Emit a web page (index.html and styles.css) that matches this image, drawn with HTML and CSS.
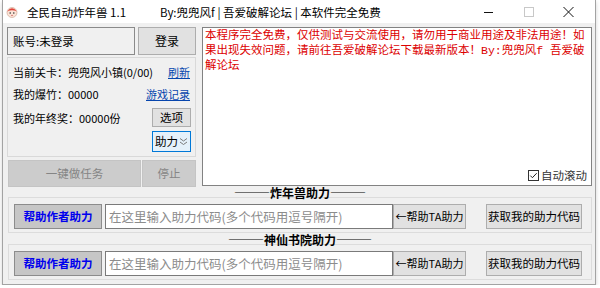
FILE: index.html
```html
<!DOCTYPE html>
<html lang="zh-CN">
<head>
  <meta charset="UTF-8">
  <meta name="viewport" content="width=device-width, initial-scale=1.0">
  <title>全民自动炸年兽 1.1</title>
  <link rel="stylesheet" href="styles.css">
</head>
<body>
  <div class="window">
    <div class="titlebar">
      <svg class="app-icon" width="12" height="12" viewBox="0 0 12 12">
        <circle cx="6" cy="6.5" r="5" fill="#fbe3d6" stroke="#c9a08c" stroke-width="0.6"/>
        <path d="M1.2 5.5 Q6 -1 10.8 5.5 Q6 3.2 1.2 5.5Z" fill="#e0443a"/>
        <circle cx="4.2" cy="7" r="0.8" fill="#333"/>
        <circle cx="7.8" cy="7" r="0.8" fill="#333"/>
        <path d="M5 9.2 Q6 10 7 9.2" stroke="#c04040" stroke-width="0.6" fill="none"/>
      </svg>
      <span class="title">全民自动炸年兽 1.1</span>
      <span class="subtitle">By:兜兜风f | 吾爱破解论坛 | 本软件完全免费</span>
      <div class="controls">
        <svg class="ctl" width="40" height="22" viewBox="0 0 40 22"><path d="M16 11.5 H25" stroke="#111" stroke-width="1"/></svg>
        <svg class="ctl" width="40" height="22" viewBox="0 0 40 22"><rect x="16.5" y="6.5" width="9" height="9" fill="none" stroke="#c8c8c8" stroke-width="1"/></svg>
        <svg class="ctl" width="40" height="22" viewBox="0 0 40 22"><path d="M15.5 6 L25.5 16 M25.5 6 L15.5 16" stroke="#111" stroke-width="1"/></svg>
      </div>
    </div>

    <div class="client">
      <div class="top">
        <div class="left">
          <div class="account-row">
            <div class="account">账号:未登录</div>
            <button class="btn login">登录</button>
          </div>

          <div class="info">
            <div class="info-row">
              <span>当前关卡：兜兜风小镇(0/00)</span>
              <a href="#" class="link">刷新</a>
            </div>
            <div class="info-row">
              <span>我的爆竹：00000</span>
              <a href="#" class="link">游戏记录</a>
            </div>
            <div class="info-row options">
              <span>我的年终奖：00000份</span>
              <button class="btn small">选项</button>
            </div>
            <div class="info-row toggle">
              <button class="btn small help-toggle">助力<svg width="9" height="9" viewBox="0 0 9 9"><path d="M1 1.5 L4.5 4 L8 1.5 M1 5 L4.5 7.5 L8 5" stroke="#7a7a7a" stroke-width="1" fill="none"/></svg></button>
            </div>
          </div>

          <div class="task-row">
            <button class="btn disabled task" disabled>一键做任务</button>
            <button class="btn disabled stop" disabled>停止</button>
          </div>
        </div>

        <div class="log">
          <div class="log-text">本程序完全免费，仅供测试与交流使用，请勿用于商业用途及非法用途！如果出现失效问题，请前往吾爱破解论坛下载最新版本！By:兜兜风f 吾爱破解论坛</div>
          <label class="auto-scroll">
            <svg width="11" height="11" viewBox="0 0 11 11"><rect x="0.5" y="0.5" width="10" height="10" fill="#fff" stroke="#333"/><path d="M2.3 5.6 L4.4 7.7 L8.7 3.2" stroke="#222" stroke-width="1" fill="none"/></svg>
            自动滚动
          </label>
        </div>
      </div>

      <section class="assist">
        <h2>———炸年兽助力———</h2>
        <div class="assist-panel">
          <button class="btn author">帮助作者助力</button>
          <input class="code-input" type="text" placeholder="在这里输入助力代码(多个代码用逗号隔开)">
          <button class="btn help-ta">←帮助TA助力</button>
          <button class="btn get-code">获取我的助力代码</button>
        </div>
      </section>

      <section class="assist second">
        <h2>———神仙书院助力———</h2>
        <div class="assist-panel">
          <button class="btn author">帮助作者助力</button>
          <input class="code-input" type="text" placeholder="在这里输入助力代码(多个代码用逗号隔开)">
          <button class="btn help-ta">←帮助TA助力</button>
          <button class="btn get-code">获取我的助力代码</button>
        </div>
      </section>
    </div>
  </div>
</body>
</html>
```

FILE: styles.css
```css
* {
  box-sizing: border-box;
}

body {
  margin: 0;
  background: #fff;
  font-family: "Noto Sans CJK SC", "Microsoft YaHei", sans-serif;
  font-size: 11px;
  color: #000;
}

.window {
  margin-left: 2px;
  width: 594px;
  height: 285px;
  border: 1px solid #a3a3a3;
  border-top: none;
  background: #f0f0f0;
  box-shadow: 0 2px 4px rgba(0, 0, 0, 0.18);
}

/* title bar */
.titlebar {
  height: 23px;
  background: #fff;
  display: flex;
  align-items: center;
  padding-left: 3px;
}

.app-icon {
  margin-right: 9px;
}

.title {
  font-size: 11.5px;
  width: 133px;
}

.subtitle {
  font-size: 11.5px;
}

.controls {
  margin-left: auto;
  display: flex;
  margin-right: 7px;
}

.ctl {
  display: block;
}

/* client */
.client {
  padding: 4px 3px 0 4px;
}

.top {
  display: flex;
  gap: 6px;
  height: 160px;
}

.left {
  width: 189px;
  display: flex;
  flex-direction: column;
}

.account-row {
  display: flex;
  gap: 3px;
  height: 28px;
}

.account {
  width: 128px;
  border: 1px solid #8a8a8a;
  background: #f0f0f0;
  display: flex;
  align-items: center;
  padding-left: 5px;
  font-size: 11.5px;
}

.btn {
  font-family: "Noto Sans CJK SC", "Microsoft YaHei", sans-serif;
  font-size: 11.5px;
  color: #000;
  background: #e1e1e1;
  border: 1px solid #adadad;
  padding: 0;
  margin: 0;
  line-height: 1;
}

.login {
  width: 58px;
  font-size: 12px;
}

.info {
  margin-top: 2px;
  height: 100px;
  border: 1px solid #d9d9d9;
  padding: 5px 4px 0 5px;
  display: flex;
  flex-direction: column;
  gap: 4px;
}

.info-row {
  display: flex;
  justify-content: space-between;
  align-items: center;
  height: 18px;
}

.info-row.options {
  height: 19px;
  margin-top: 1px;
}

.info-row.toggle {
  justify-content: flex-end;
  height: 21px;
}

.link {
  color: #0645ad;
  text-decoration: underline;
  margin-right: 1px;
}

.btn.small {
  width: 39px;
  height: 19px;
}

.help-toggle {
  height: 21px !important;
  background: #e5f1fb;
  border-color: #0078d7;
  display: flex;
  align-items: center;
  justify-content: center;
  gap: 1px;
}

.task-row {
  display: flex;
  gap: 1px;
  margin-top: 3px;
  height: 27px;
  padding-left: 1px;
}

.btn.disabled {
  background: #cccccc;
  border-color: #c4c4c4;
  color: #858585;
}

.task {
  width: 133px;
}

.stop {
  width: 54px;
}

/* log */
.log {
  width: 390px;
  height: 159px;
  background: #fff;
  border: 1px solid #828282;
  display: flex;
  flex-direction: column;
  padding: 0 4px 2px 2px;
}

.log-text {
  flex: 1;
  color: #dc0000;
  font-family: "Liberation Mono", "Noto Sans CJK SC", monospace;
  font-size: 11.5px;
  line-height: 15px;
  word-break: break-all;
  padding-right: 2px;
}

.auto-scroll {
  align-self: flex-end;
  display: flex;
  align-items: center;
  gap: 2px;
  font-size: 11.5px;
  color: #333;
}

/* assist sections */
.assist {
  margin-left: 1px;
}

.assist.second {
  margin-top: 1px;
}

.assist h2 {
  margin: 0;
  height: 12px;
  font-size: 12px;
  line-height: 12px;
  font-weight: bold;
  text-align: center;
  position: relative;
  z-index: 1;
}

.assist-panel {
  margin-top: -2px;
  height: 36px;
  border: 1px solid #dcdcdc;
  padding: 6px 9px 3px 5px;
  display: flex;
  align-items: stretch;
}

.author {
  width: 88px;
  background: #c6c6c6;
  border-color: #8c8c8c;
  color: #0000ee;
  font-weight: bold;
  margin-right: 3px;
}

.code-input {
  width: 288px;
  border: 1px solid #7a7a7a;
  background: #fff;
  font-family: "Noto Sans CJK SC", "Microsoft YaHei", sans-serif;
  font-size: 12.5px;
  padding: 0 3px;
  outline: none;
}

.code-input::placeholder {
  color: #8c8c8c;
}

.help-ta {
  width: 73px;
  font-size: 11px;
}

.get-code {
  width: 96px;
  margin-left: 20px;
}
```
